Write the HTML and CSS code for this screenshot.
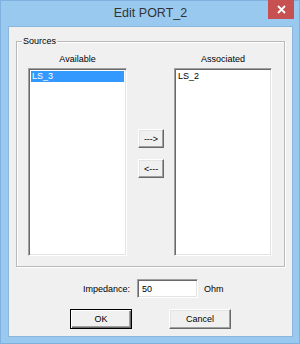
FILE: index.html
```html
<!DOCTYPE html>
<html lang="en">

<head>
    <meta charset="UTF-8">
    <title>Edit PORT_2</title>
    <link rel="stylesheet" href="styles.css">
</head>

<body>
    <div class="window">
        <div class="titlebar">
            <span class="title">Edit PORT_2</span>
            <button class="close-btn">
                <svg width="9" height="9" viewBox="0 0 9 9">
                    <path d="M1 1 L8 8 M8 1 L1 8" stroke="#ffffff" stroke-width="1.8" fill="none" />
                </svg>
            </button>
        </div>
        <div class="client">
            <div class="group">
                <span class="legend">Sources</span>
                <div class="list-col left-col">
                    <div class="col-label">Available</div>
                    <div class="listbox">
                        <div class="item selected">LS_3</div>
                    </div>
                </div>
                <div class="arrows">
                    <button class="btn arrow-btn">---&gt;</button>
                    <button class="btn arrow-btn">&lt;---</button>
                </div>
                <div class="list-col right-col">
                    <div class="col-label">Associated</div>
                    <div class="listbox">
                        <div class="item">LS_2</div>
                    </div>
                </div>
            </div>
            <div class="impedance-row">
                <span class="field-label">Impedance:</span>
                <div class="textbox">50</div>
                <span class="unit">Ohm</span>
            </div>
            <div class="button-row">
                <button class="btn dlg-btn default">OK</button>
                <button class="btn dlg-btn">Cancel</button>
            </div>
        </div>
    </div>
</body>

</html>
```

FILE: styles.css
```css
* {
    margin: 0;
    padding: 0;
    box-sizing: border-box;
}

body {
    background-color: #ffffff;
    font-family: 'Liberation Sans', Arial, sans-serif;
    font-size: 9px;
    color: #000000;
}

.window {
    position: relative;
    width: 300px;
    height: 344px;
    background-color: #9ac9f0;
    border: 1px solid #7fb1df;
    padding: 0 6px 6px 7px;
    display: flex;
    flex-direction: column;
}

.titlebar {
    height: 25px;
    display: flex;
    align-items: center;
    justify-content: center;
    flex-shrink: 0;
}

.title {
    font-size: 12.5px;
    color: #333333;
    padding-bottom: 1px;
}

.close-btn {
    position: absolute;
    top: -1px;
    right: 5px;
    width: 26px;
    height: 19px;
    border: none;
    background-color: #c75050;
    display: flex;
    align-items: center;
    justify-content: center;
}

.client {
    flex: 1;
    background-color: #f0f0f0;
    border: 1px solid #8db6dc;
    padding: 0 7px;
}

.group {
    position: relative;
    margin-top: 14px;
    height: 226px;
    border: 1px solid #b9b9b9;
    box-shadow: inset 1px 1px 0 #ffffff, 1px 1px 0 #ffffff;
    padding: 11px 10px 10px 11px;
    display: flex;
}

.legend {
    position: absolute;
    top: -7px;
    left: 5px;
    padding: 0 1px;
    background-color: #f0f0f0;
    line-height: 12px;
}

.list-col {
    display: flex;
    flex-direction: column;
}

.left-col {
    width: 99px;
}

.right-col {
    width: 98px;
}

.col-label {
    height: 13px;
    line-height: 13px;
    text-align: center;
    margin-bottom: 2px;
}

.listbox {
    height: 188px;
    background-color: #ffffff;
    border: 1px solid;
    border-color: #a0a0a0 #ffffff #ffffff #a0a0a0;
    box-shadow: inset 1px 1px 0 #696969, inset -1px -1px 0 #e3e3e3;
    padding: 2px;
}

.item {
    height: 11px;
    line-height: 11px;
    padding-left: 1px;
}

.item.selected {
    background-color: #3399ff;
    color: #ffffff;
}

.arrows {
    width: 26px;
    margin: 76px 10px 0 11px;
    display: flex;
    flex-direction: column;
    gap: 11px;
}

.btn {
    font-family: 'Liberation Sans', Arial, sans-serif;
    font-size: 9px;
    color: #000000;
    background-color: #f0f0f0;
    border: 1px solid;
    border-color: #ffffff #696969 #696969 #ffffff;
    box-shadow: inset -1px -1px 0 #a0a0a0, inset 1px 1px 0 #e3e3e3;
}

.arrow-btn {
    height: 19px;
}

.impedance-row {
    margin-top: 12px;
    padding-left: 67px;
    display: flex;
    align-items: center;
    height: 19px;
}

.field-label {
    width: 54px;
}

.textbox {
    width: 61px;
    height: 19px;
    background-color: #ffffff;
    border: 1px solid;
    border-color: #a0a0a0 #ffffff #ffffff #a0a0a0;
    box-shadow: inset 1px 1px 0 #696969, inset -1px -1px 0 #e3e3e3;
    padding: 4px 0 0 4px;
    line-height: 10px;
}

.unit {
    margin-left: 6px;
}

.button-row {
    margin-top: 11px;
    display: flex;
    justify-content: center;
    gap: 37px;
}

.dlg-btn {
    width: 62px;
    height: 20px;
}

.dlg-btn.default {
    border: 1px solid #000000;
    box-shadow: inset 1px 1px 0 #ffffff, inset -1px -1px 0 #696969, inset -2px -2px 0 #a0a0a0;
}
```
